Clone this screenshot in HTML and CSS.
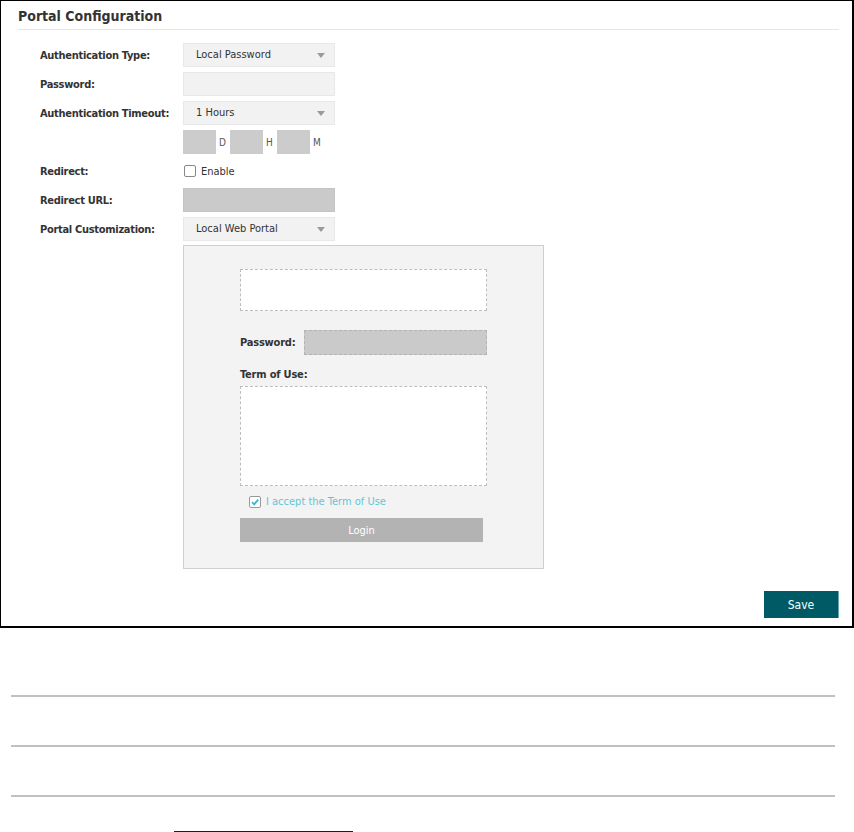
FILE: index.html
```html
<!DOCTYPE html>
<html lang="en">
<head>
    <meta charset="UTF-8">
    <meta name="viewport" content="width=device-width, initial-scale=1.0">
    <title>Portal Configuration</title>
    <link rel="stylesheet" href="styles.css">
</head>

<body>
<div class="panel">
    <div class="panel__title">Portal Configuration</div>

    <div class="form">
        <div class="row">
            <label class="row__label">Authentication Type:</label>
            <div class="select">Local Password<span class="select__caret"></span></div>
        </div>
        <div class="row">
            <label class="row__label">Password:</label>
            <div class="input"></div>
        </div>
        <div class="row">
            <label class="row__label">Authentication Timeout:</label>
            <div class="select">1 Hours<span class="select__caret"></span></div>
        </div>
        <div class="row">
            <span class="row__label"></span>
            <div class="timeout">
                <span class="timeout__box"></span><span class="timeout__unit">D</span>
                <span class="timeout__box"></span><span class="timeout__unit">H</span>
                <span class="timeout__box"></span><span class="timeout__unit">M</span>
            </div>
        </div>
        <div class="row">
            <label class="row__label">Redirect:</label>
            <label class="check"><span class="check__box"></span>Enable</label>
        </div>
        <div class="row">
            <label class="row__label">Redirect URL:</label>
            <div class="input input--disabled"></div>
        </div>
        <div class="row">
            <label class="row__label">Portal Customization:</label>
            <div class="select">Local Web Portal<span class="select__caret"></span></div>
        </div>

        <div class="preview">
            <div class="preview__logo"></div>
            <div class="preview__pass">
                <span class="preview__label">Password:</span>
                <div class="preview__input"></div>
            </div>
            <div class="preview__label preview__label--terms">Term of Use:</div>
            <div class="preview__terms"></div>
            <label class="preview__accept">
                <span class="check__box check__box--on">
                    <svg width="10" height="10" viewBox="0 0 10 10"><path d="M2 5.2 L4.2 7.4 L8.2 2.6" fill="none" stroke="#3cb8cc" stroke-width="1.8"/></svg>
                </span>
                I accept the Term of Use
            </label>
            <button class="preview__login">Login</button>
        </div>
    </div>

    <div class="panel__footer">
        <button class="btn-save">Save</button>
    </div>
</div>

<div class="rules">
    <div class="rules__line"></div>
    <div class="rules__line"></div>
    <div class="rules__line"></div>
</div>
<a class="more-link" href="#"></a>
</body>
</html>
```

FILE: styles.css
```css
html {
    box-sizing: border-box;
}

*,
*::before,
*::after {
    box-sizing: inherit;
}

body {
    margin: 0;
    font-family: "DejaVu Sans Condensed", "DejaVu Sans", sans-serif;
    font-size: 11px;
    color: #333;
    background: #fff;
    height: 832px;
    overflow: hidden;
}

.panel {
    width: 854px;
    height: 628px;
    border: 2px solid #000;
    border-top-width: 1px;
    border-left-width: 1px;
    padding: 0 13px 0 17px;
}

.panel__title {
    font-size: 14px;
    font-weight: bold;
    height: 29px;
    line-height: 30px;
    border-bottom: 1px solid #e6e6e6;
    color: #333;
}

.form {
    padding: 13px 0 0 22px;
}

.row {
    display: flex;
    align-items: center;
    height: 24px;
    margin-bottom: 5px;
}

.row__label {
    width: 143px;
    font-weight: bold;
    letter-spacing: -0.3px;
    flex-shrink: 0;
}

.select,
.input {
    width: 152px;
    height: 24px;
    background: #f2f2f2;
    border: 1px solid #e8e8e8;
    padding: 0 12px;
    line-height: 22px;
    position: relative;
}

.input--disabled {
    background: #cacaca;
    border-color: #c4c4c4;
}

.select__caret {
    position: absolute;
    right: 9px;
    top: 9px;
    border-left: 4px solid transparent;
    border-right: 4px solid transparent;
    border-top: 5px solid #9a9a9a;
}

.timeout {
    display: flex;
    align-items: center;
    height: 24px;
}

.timeout__box {
    width: 33px;
    height: 24px;
    background: #cccccc;
}

.timeout__unit {
    width: 14px;
    padding-left: 3px;
    font-size: 10px;
    color: #555;
}

.check {
    display: flex;
    align-items: center;
    gap: 5px;
    padding-left: 1px;
}

.check__box {
    width: 12px;
    height: 12px;
    border: 1px solid #888;
    border-radius: 2px;
    background: #fff;
    display: flex;
    align-items: center;
    justify-content: center;
}

.preview {
    margin: -1px 0 0 143px;
    width: 361px;
    height: 324px;
    background: #f3f3f3;
    border: 1px solid #cfcfcf;
    padding: 23px 0 0 56px;
}

.preview__logo {
    width: 247px;
    height: 42px;
    background: #fff;
    border: 1px dashed #bdbdbd;
}

.preview__pass {
    display: flex;
    align-items: center;
    margin-top: 19px;
}

.preview__label {
    font-weight: bold;
    letter-spacing: -0.2px;
    width: 64px;
}

.preview__input {
    width: 183px;
    height: 25px;
    background: #cacaca;
    border: 1px dashed #b3b3b3;
}

.preview__label--terms {
    width: auto;
    margin-top: 13px;
    height: 18px;
}

.preview__terms {
    width: 247px;
    height: 100px;
    background: #fff;
    border: 1px dashed #bdbdbd;
}

.preview__accept {
    display: flex;
    align-items: center;
    gap: 5px;
    margin: 9px 0 0 9px;
    color: #62c6d6;
    height: 13px;
}

.check__box--on {
    border-color: #999;
}

.preview__login {
    display: block;
    margin-top: 10px;
    width: 243px;
    height: 24px;
    border: 0;
    background: #b3b3b3;
    color: #fff;
    font-family: inherit;
    font-size: 11px;
}

.panel__footer {
    display: flex;
    justify-content: flex-end;
    margin-top: 22px;
}

.btn-save {
    width: 75px;
    height: 27px;
    border: 0;
    border-right: 1px solid #6aa3ab;
    background: #005a66;
    color: #fff;
    font-family: inherit;
    font-size: 12px;
}

.rules {
    padding: 67px 19px 0 11px;
}

.rules__line {
    height: 2px;
    background: #c0c0c0;
    margin-bottom: 48px;
}

.more-link {
    display: block;
    margin: -14px 0 0 174px;
    width: 179px;
    height: 3px;
    background: #0000ff;
}
```
